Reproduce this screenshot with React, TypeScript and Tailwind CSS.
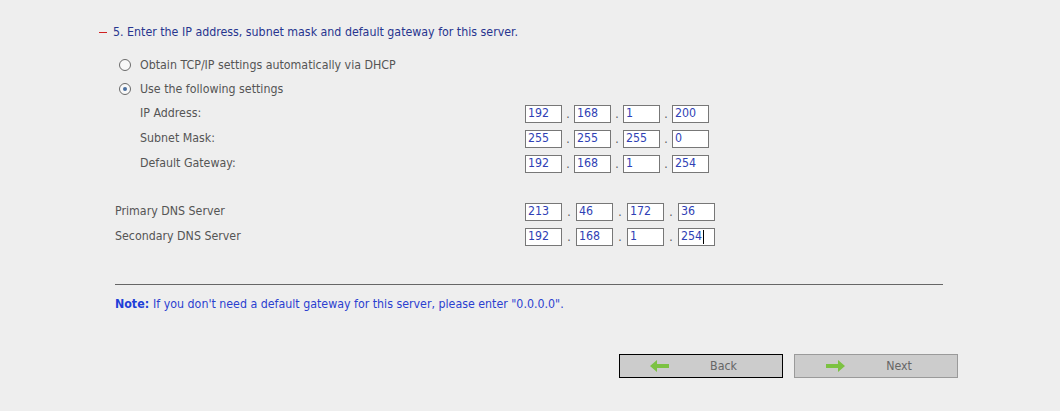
import React from 'react';

type Octets = string[];

function IpBox({ value, cursor }: { value: string; cursor?: boolean }) {
  return (
    <div className="w-[37px] h-[18px] border border-[#777] bg-white flex items-center pl-[2px] text-[12.3px] leading-none text-[#2f3fb5]">
      <span>{value}</span>
      {cursor && <span className="ml-[1px] w-px h-[14px] bg-black" />}
    </div>
  );
}

function IpField({ parts, gap, cursorLast }: { parts: Octets; gap: string; cursorLast?: boolean }) {
  return (
    <div className="flex items-center">
      {parts.map((p, i) => (
        <React.Fragment key={i}>
          {i > 0 && <span className={`${gap} text-center text-[#555] text-[12px]`}>.</span>}
          <IpBox value={p} cursor={cursorLast && i === parts.length - 1} />
        </React.Fragment>
      ))}
    </div>
  );
}

function Radio({ checked }: { checked?: boolean }) {
  return (
    <div className="w-[12px] h-[12px] rounded-full border border-[#6a6a6a] bg-[#f8f8f8] flex items-center justify-center">
      {checked && <div className="w-[4px] h-[4px] rounded-full bg-[#4a6fa0]" />}
    </div>
  );
}

function Arrow({ dir }: { dir: 'left' | 'right' }) {
  return (
    <svg width="19" height="12" viewBox="0 0 19 12" className={dir === 'right' ? 'rotate-180' : ''}>
      <path d="M0 6 L7 0 L7 4 L19 4 L19 8 L7 8 L7 12 Z" fill="#7cc242" />
    </svg>
  );
}

export default function App() {
  const ipRows = [
    { label: 'IP Address:', parts: ['192', '168', '1', '200'] },
    { label: 'Subnet Mask:', parts: ['255', '255', '255', '0'] },
    { label: 'Default Gateway:', parts: ['192', '168', '1', '254'] },
  ];
  const dnsRows = [
    { label: 'Primary DNS Server', parts: ['213', '46', '172', '36'] },
    { label: 'Secondary DNS Server', parts: ['192', '168', '1', '254'], cursor: true },
  ];

  return (
    <div className="w-[1060px] h-[411px] bg-[#eeeeee] overflow-hidden font-['DejaVu_Sans_Condensed','DejaVu_Sans',sans-serif] text-[12.3px]">
      <div className="pl-[99px] pt-[24px]">
        {/* step title */}
        <div className="h-4 flex items-center">
          <span className="w-[8px] h-px bg-[#d02020] mr-[6px]" />
          <span className="text-[#27358f]">5. Enter the IP address, subnet mask and default gateway for this server.</span>
        </div>

        {/* radio options */}
        <div className="mt-[13px] pl-[20px] text-[#555]">
          <div className="h-6 flex items-center gap-[9px]">
            <Radio />
            <span>Obtain TCP/IP settings automatically via DHCP</span>
          </div>
          <div className="h-6 flex items-center gap-[9px]">
            <Radio checked />
            <span>Use the following settings</span>
          </div>
        </div>

        {/* static settings */}
        <div className="pl-[41px] text-[#555]">
          {ipRows.map((r) => (
            <div key={r.label} className="h-[25px] flex items-center">
              <span className="w-[385px]">{r.label}</span>
              <IpField parts={r.parts} gap="w-[12px]" />
            </div>
          ))}
        </div>

        {/* dns */}
        <div className="mt-[23px] pl-[16px] text-[#555]">
          {dnsRows.map((r) => (
            <div key={r.label} className="h-[25px] flex items-center">
              <span className="w-[410px]">{r.label}</span>
              <IpField parts={r.parts} gap="w-[14px]" cursorLast={r.cursor} />
            </div>
          ))}
        </div>

        <div className="mt-[35px] ml-[16px] w-[828px] h-px bg-[#666]" />

        <div className="mt-[11px] ml-[16px] h-4 flex items-center text-[#2b3fd0]">
          <span className="font-bold text-[#1f3fd8]">Note:</span>
          <span className="ml-[4px]">If you don't need a default gateway for this server, please enter "0.0.0.0".</span>
        </div>
      </div>

      {/* buttons */}
      <div className="mt-[42px] pr-[102px] flex justify-end gap-[11px] text-[#666]">
        <button className="w-[164px] h-[24px] bg-[#cccccc] border border-black flex items-center pl-[30px]">
          <Arrow dir="left" />
          <span className="flex-1 text-center pr-[4px]">Back</span>
        </button>
        <button className="w-[164px] h-[24px] bg-[#cccccc] border border-[#9a9a9a] flex items-center pl-[31px]">
          <Arrow dir="right" />
          <span className="flex-1 text-center pr-[4px]">Next</span>
        </button>
      </div>
    </div>
  );
}
